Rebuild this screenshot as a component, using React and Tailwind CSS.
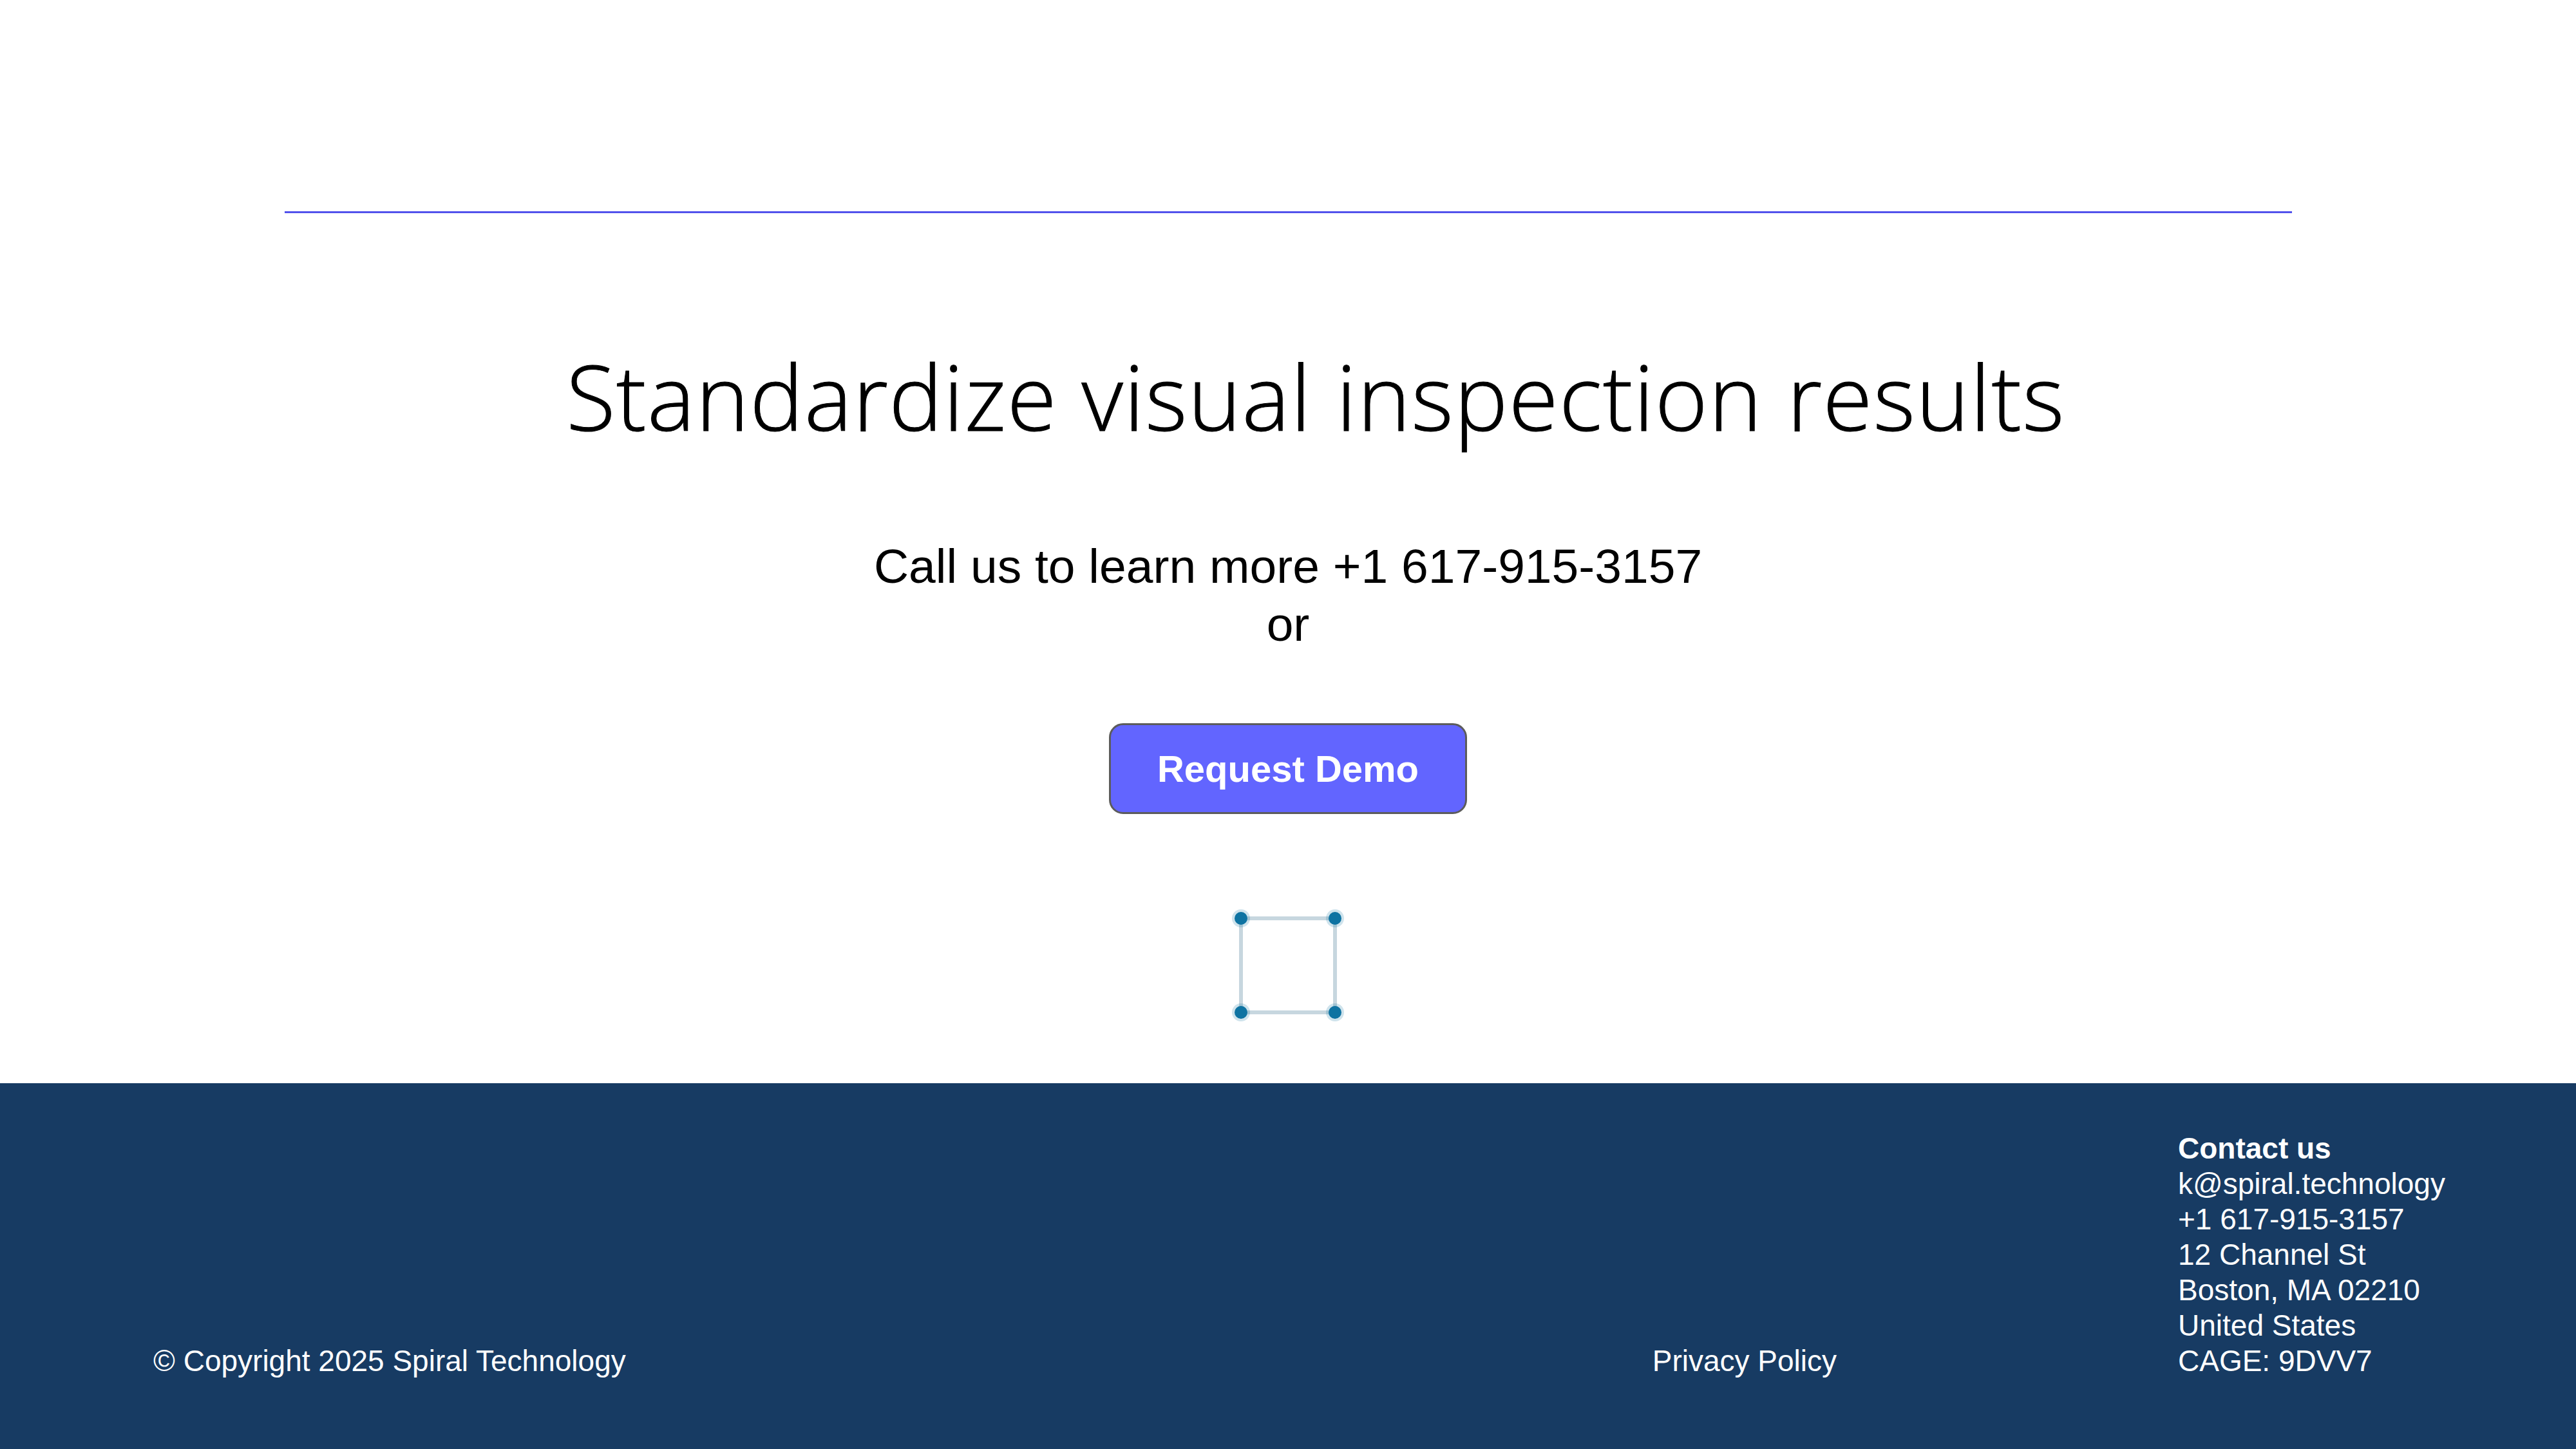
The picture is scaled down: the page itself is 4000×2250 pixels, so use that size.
import React from "react";

function CropIcon() {
  const pts = [
    [17, 17],
    [163, 17],
    [17, 163],
    [163, 163],
  ];
  return (
    <svg width="180" height="180" viewBox="0 0 180 180">
      <rect x="17" y="17" width="146" height="146" fill="none" stroke="#c7d7df" strokeWidth="6" />
      {pts.map(([x, y], i) => (
        <g key={i}>
          <circle cx={x} cy={y} r="14" fill="#0e73a2" opacity="0.2" />
          <circle cx={x} cy={y} r="10" fill="#0e73a2" />
        </g>
      ))}
    </svg>
  );
}

export default function App() {
  const contact = [
    "k@spiral.technology",
    "+1 617-915-3157",
    "12 Channel St",
    "Boston, MA 02210",
    "United States",
    "CAGE: 9DVV7",
  ];

  return (
    <div className="w-[4000px] h-[2250px] bg-white flex flex-col font-['Liberation_Sans',Arial,sans-serif]">
      <main className="h-[1682px] flex flex-col items-center pt-[328px]">
        <div className="w-[3117px] h-[3px] bg-[#5252ec]" />

        <h1 className="mt-[200px] pl-[86px] text-[140px] leading-[168px] font-light tracking-[1.3px] text-black font-['Open_Sans',sans-serif] [-webkit-text-stroke:1px_black]">
          Standardize visual inspection results
        </h1>

        <div className="mt-[135px] text-center text-[75px] leading-[90px] text-black">
          <p>Call us to learn more +1 617-915-3157</p>
          <p>or</p>
        </div>

        <button className="mt-[109px] w-[556px] h-[141px] rounded-[22px] border-[3px] border-[#5c5c5c] bg-[#6265ff] text-white text-[58px] font-bold">
          Request Demo
        </button>

        <div className="mt-[145px]">
          <CropIcon />
        </div>
      </main>

      <footer className="flex-1 bg-[#173b63] text-white text-[46px] leading-[55px] flex items-end pl-[238px] pr-[158px] pb-[109px]">
        <p className="flex-1">© Copyright 2025 Spiral Technology</p>
        <p className="mr-[530px]">Privacy Policy</p>
        <div className="w-[460px]">
          <p className="font-bold">Contact us</p>
          {contact.map((line) => (
            <p key={line}>{line}</p>
          ))}
        </div>
      </footer>
    </div>
  );
}
